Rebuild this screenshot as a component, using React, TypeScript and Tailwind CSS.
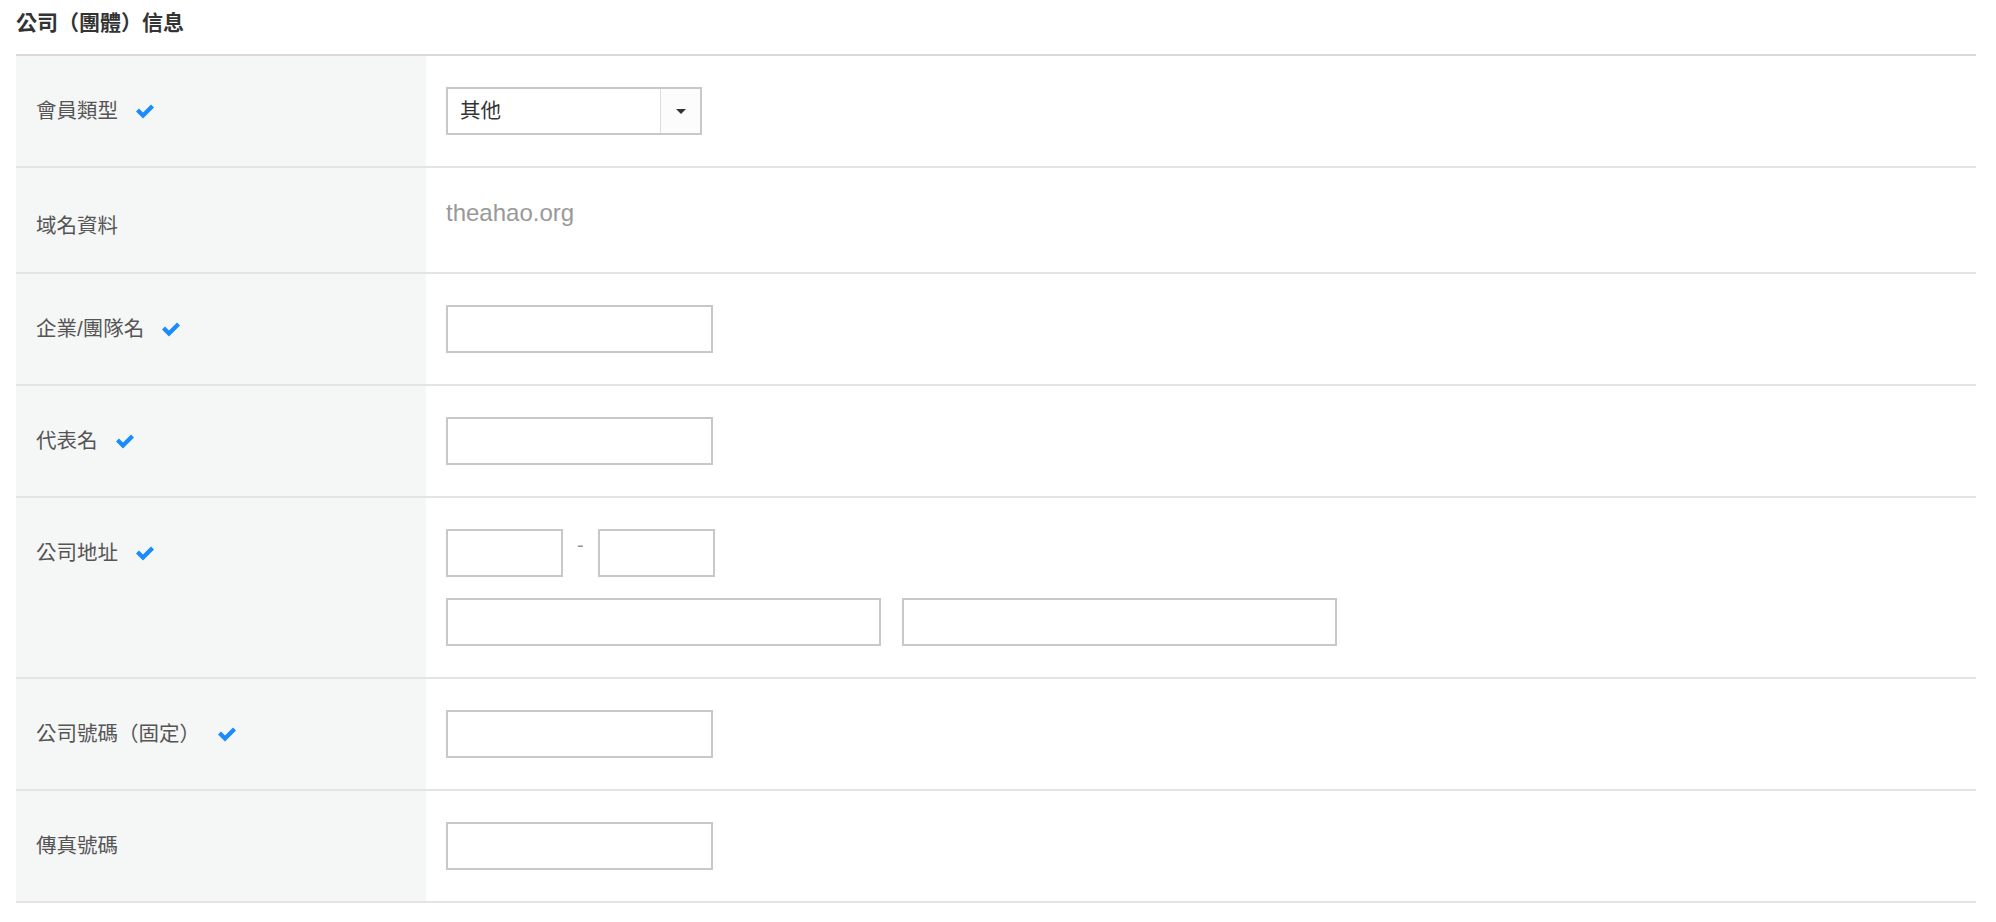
import React from 'react';

const Check = () => (
  <svg width="18" height="15" viewBox="0 0 18 15" className="ml-[18px] shrink-0">
    <polygon points="0,7.5 3,4.5 7,8.5 15,0.5 18,3.5 7,14.5" fill="#1a8cff" />
  </svg>
);

interface RowProps {
  label: string;
  required?: boolean;
  labelClass?: string;
  children: React.ReactNode;
}

const Row: React.FC<RowProps> = ({ label, required, labelClass, children }) => (
  <div className="flex border-b-2 border-[#e3e3e8]">
    <div className={`w-[410px] shrink-0 bg-[#f5f6f6] pl-[20px] text-[20.5px] leading-[32px] text-[#555] ${labelClass ?? 'pt-[39px] pb-[33px]'}`}>
      <div className="flex h-[32px] items-center">
        <span>{label}</span>
        {required && <Check />}
      </div>
    </div>
    <div className="flex-1 pl-[20px] py-[31px]">{children}</div>
  </div>
);

const TextInput: React.FC<{ className?: string }> = ({ className }) => (
  <input
    type="text"
    className={`h-[48px] border-2 border-[#c8c8c8] bg-white px-3 text-[20px] outline-none ${className ?? 'w-[267px]'}`}
  />
);

export default function App() {
  return (
    <div className="min-h-screen bg-white pl-[16px] pr-[20px] font-['Liberation_Sans','Noto_Sans_CJK_TC',sans-serif]">
      <h2 className="pt-[9px] pb-[17px] text-[21px] leading-[28px] font-bold text-[#333]">公司（團體）信息</h2>

      <div className="border-t-2 border-[#d9d9de]">
        <Row label="會員類型" required>
          <div className="flex h-[48px] w-[256px] border-2 border-[#c8c8c8] bg-white">
            <div className="flex flex-1 items-center pl-[12px] text-[20.5px] text-[#333]">其他</div>
            <div className="flex w-[40px] items-center justify-center border-l border-[#dedede] bg-[#fcfcfc]">
              <svg width="10" height="5" viewBox="0 0 10 5">
                <polygon points="0,0 10,0 5,5" fill="#333" />
              </svg>
            </div>
          </div>
        </Row>

        <Row label="域名資料" labelClass="pt-[42px] pb-[30px]">
          <div className="-mt-[2px] text-[24px] leading-[32px] text-[#999]">theahao.org</div>
        </Row>

        <Row label="企業/團隊名" required>
          <TextInput />
        </Row>

        <Row label="代表名" required>
          <TextInput />
        </Row>

        <Row label="公司地址" required>
          <div className="flex flex-col gap-[21px]">
            <div className="flex items-start">
              <TextInput className="w-[117px]" />
              <span className="mx-[14px] text-[20px] leading-[32px] text-[#999]">-</span>
              <TextInput className="w-[117px]" />
            </div>
            <div className="flex gap-[21px]">
              <TextInput className="w-[435px]" />
              <TextInput className="w-[435px]" />
            </div>
          </div>
        </Row>

        <Row label="公司號碼（固定）" required>
          <TextInput />
        </Row>

        <Row label="傳真號碼">
          <TextInput />
        </Row>
      </div>
    </div>
  );
}
